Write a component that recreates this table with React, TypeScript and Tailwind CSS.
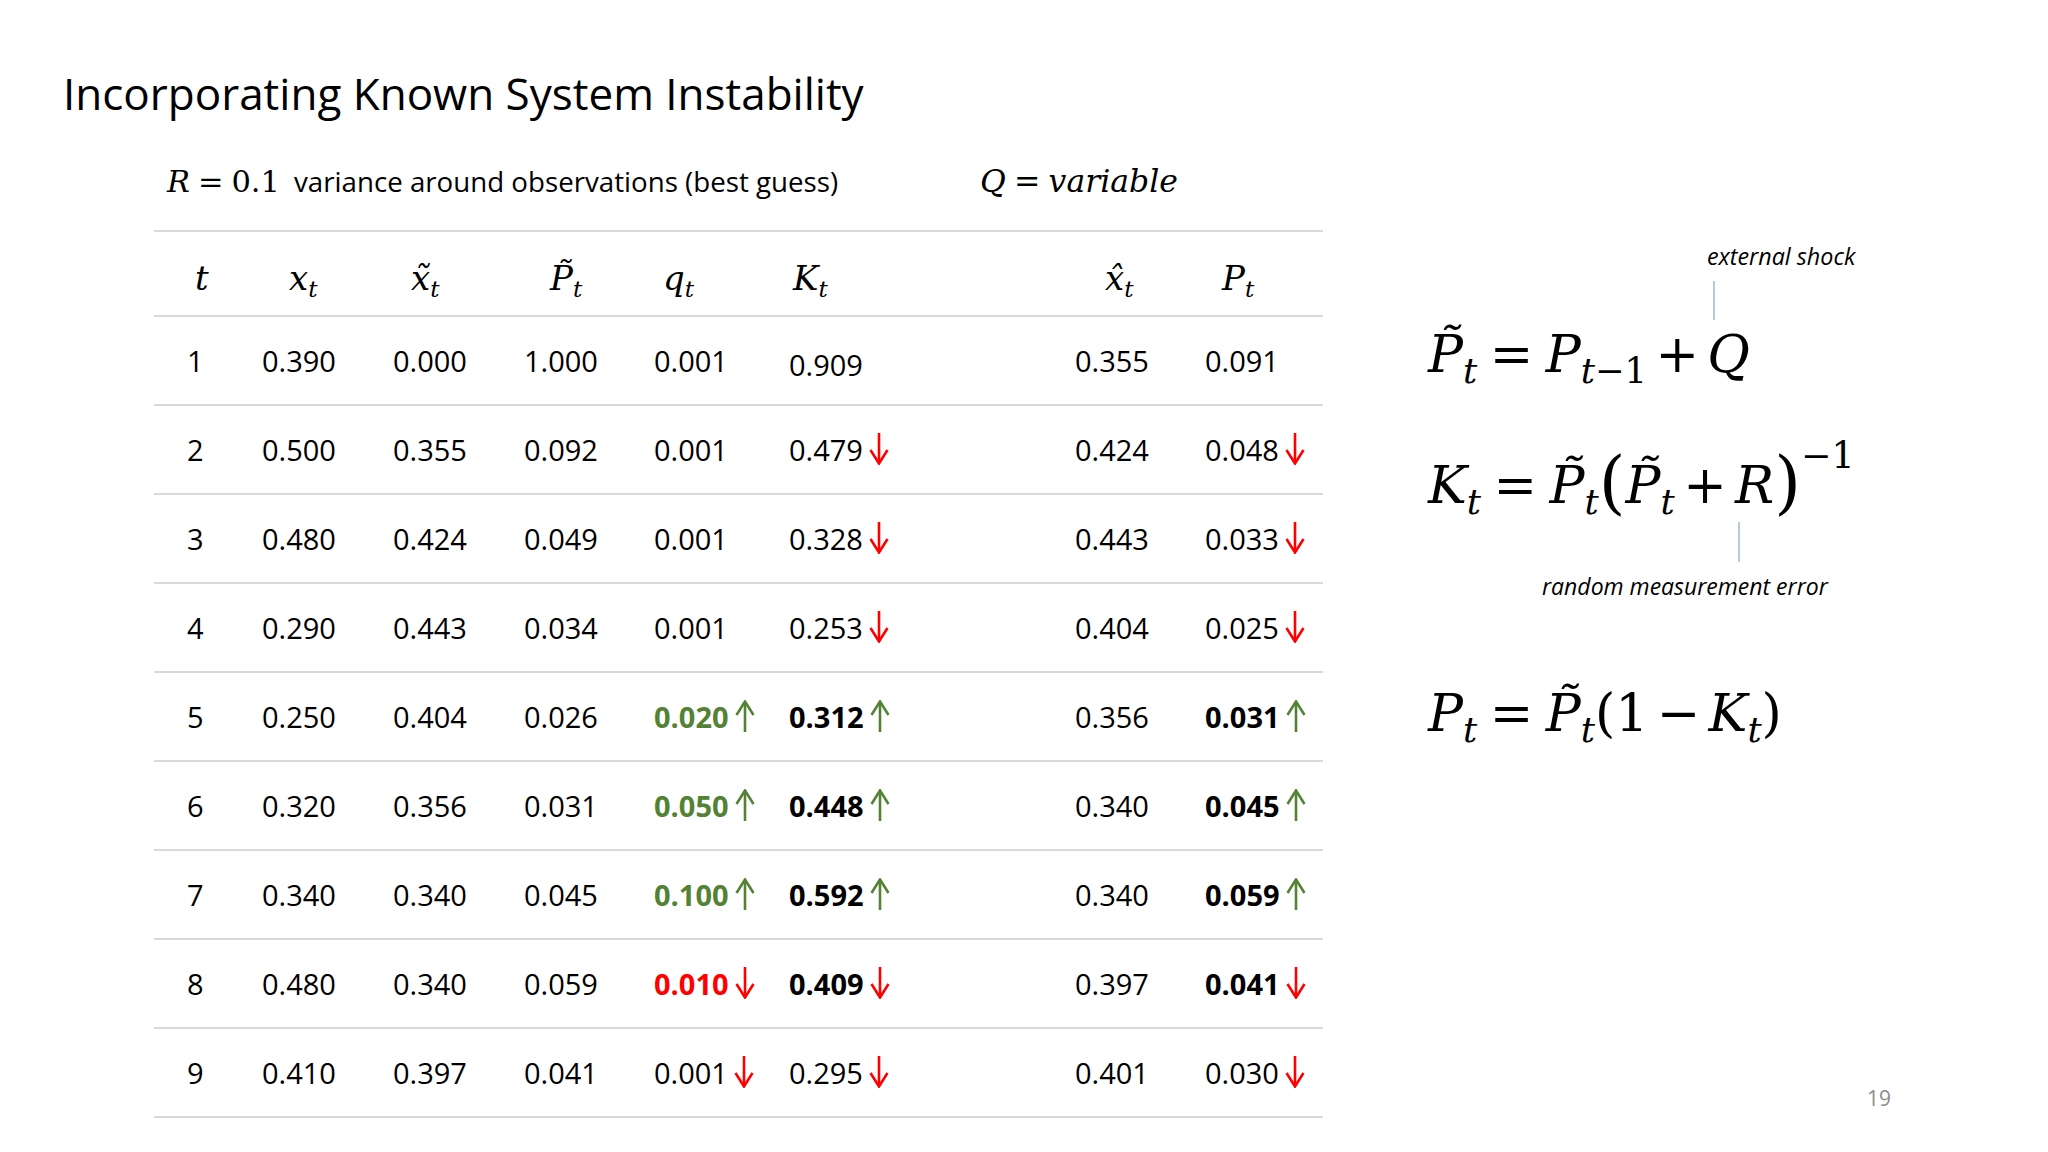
import React from "react";

type Cell = { v: string; bold?: boolean; color?: "green" | "red"; arrow?: "up" | "down" };

const rows: { t: string; cells: Cell[] }[] = [
  { t: "1", cells: [{ v: "0.390" }, { v: "0.000" }, { v: "1.000" }, { v: "0.001" }, { v: "0.909" }, { v: "0.355" }, { v: "0.091" }] },
  { t: "2", cells: [{ v: "0.500" }, { v: "0.355" }, { v: "0.092" }, { v: "0.001" }, { v: "0.479", arrow: "down" }, { v: "0.424" }, { v: "0.048", arrow: "down" }] },
  { t: "3", cells: [{ v: "0.480" }, { v: "0.424" }, { v: "0.049" }, { v: "0.001" }, { v: "0.328", arrow: "down" }, { v: "0.443" }, { v: "0.033", arrow: "down" }] },
  { t: "4", cells: [{ v: "0.290" }, { v: "0.443" }, { v: "0.034" }, { v: "0.001" }, { v: "0.253", arrow: "down" }, { v: "0.404" }, { v: "0.025", arrow: "down" }] },
  { t: "5", cells: [{ v: "0.250" }, { v: "0.404" }, { v: "0.026" }, { v: "0.020", bold: true, color: "green", arrow: "up" }, { v: "0.312", bold: true, arrow: "up" }, { v: "0.356" }, { v: "0.031", bold: true, arrow: "up" }] },
  { t: "6", cells: [{ v: "0.320" }, { v: "0.356" }, { v: "0.031" }, { v: "0.050", bold: true, color: "green", arrow: "up" }, { v: "0.448", bold: true, arrow: "up" }, { v: "0.340" }, { v: "0.045", bold: true, arrow: "up" }] },
  { t: "7", cells: [{ v: "0.340" }, { v: "0.340" }, { v: "0.045" }, { v: "0.100", bold: true, color: "green", arrow: "up" }, { v: "0.592", bold: true, arrow: "up" }, { v: "0.340" }, { v: "0.059", bold: true, arrow: "up" }] },
  { t: "8", cells: [{ v: "0.480" }, { v: "0.340" }, { v: "0.059" }, { v: "0.010", bold: true, color: "red", arrow: "down" }, { v: "0.409", bold: true, arrow: "down" }, { v: "0.397" }, { v: "0.041", bold: true, arrow: "down" }] },
  { t: "9", cells: [{ v: "0.410" }, { v: "0.397" }, { v: "0.041" }, { v: "0.001", arrow: "down" }, { v: "0.295", arrow: "down" }, { v: "0.401" }, { v: "0.030", arrow: "down" }] },
];

const Arrow = ({ dir }: { dir: "up" | "down" }) => {
  const c = dir === "up" ? "#548235" : "#ff0000";
  return (
    <svg width="20" height="32" viewBox="0 0 20 32" className="ml-[6px] -translate-y-[1px] shrink-0">
      {dir === "down" ? (
        <>
          <line x1="10" y1="0" x2="10" y2="30" stroke={c} strokeWidth="2.6" />
          <polyline points="1.5,17 10,30.5 18.5,17" fill="none" stroke={c} strokeWidth="2.6" />
        </>
      ) : (
        <>
          <line x1="10" y1="2" x2="10" y2="32" stroke={c} strokeWidth="2.6" />
          <polyline points="1.5,15 10,1.5 18.5,15" fill="none" stroke={c} strokeWidth="2.6" />
        </>
      )}
    </svg>
  );
};

const Sub = ({ children }: { children: React.ReactNode }) => (
  <span className="text-[0.68em] align-[-0.32em] leading-[0]">{children}</span>
);

const Op = ({ children, wide }: { children: React.ReactNode; wide?: boolean }) => (
  <span className={`not-italic ${wide ? "mx-[0.24em]" : "mx-[0.16em]"}`}>{children}</span>
);

const headers: { node: React.ReactNode; pl: string }[] = [
  { node: <>x<Sub>t</Sub></>, pl: "pl-[39px]" },
  { node: <>x&#x0303;<Sub>t</Sub></>, pl: "pl-[30px]" },
  { node: <>P&#x0303;<Sub>t</Sub></>, pl: "pl-[38px]" },
  { node: <>q<Sub>t</Sub></>, pl: "pl-[21px]" },
  { node: <>K<Sub>t</Sub></>, pl: "pl-[16px]" },
  { node: <>x&#x0302;<Sub>t</Sub></>, pl: "pl-[42px]" },
  { node: <>P<Sub>t</Sub></>, pl: "pl-[29px]" },
];

const grid = "grid grid-cols-[96px_131px_131px_130px_135px_286px_130px_130px]";
const math = "font-['DejaVu_Serif',serif] italic";

export default function App() {
  return (
    <div className="w-[2048px] h-[1152px] bg-white text-black font-['Open_Sans',sans-serif] flex flex-col pt-[71px]">
      <h1 className="pl-[63px] text-[44px] leading-[44px] h-[44px]">Incorporating Known System Instability</h1>

      <div className="flex flex-1 pb-[35px]">
        {/* left: parameters + table */}
        <div className="ml-[154px] w-[1169px] flex flex-col">
          <div className="h-[115px] pt-[46px] pl-[13px] flex items-baseline leading-[40px]">
            <span className="w-[127px] font-['DejaVu_Serif',serif] text-[30.5px]">
              <i>R</i>
              <span className="mx-[0.26em]">=</span>0.1
            </span>
            <span className="w-[686px] text-[27.7px]">variance around observations (best guess)</span>
            <span className={`${math} text-[31.5px]`}>
              Q<span className="not-italic mx-[0.26em]">=</span>variable
            </span>
          </div>

          <div className="border-t-2 border-[#d9d9d9]">
            <div className={`${grid} h-[85px] items-center border-b-2 border-[#d9d9d9] ${math} text-[34px] pt-[10px]`}>
              <div className="pl-[41px]">t</div>
              {headers.map((h, i) => (
                <div key={i} className={h.pl}>
                  {h.node}
                </div>
              ))}
            </div>
            {rows.map((r) => (
              <div key={r.t} className={`${grid} h-[89px] items-center border-b-2 border-[#d9d9d9] text-[29px]`}>
                <div className="pl-[33px]">{r.t}</div>
                {r.cells.map((c, i) => (
                  <div
                    key={i}
                    className={`pl-[12px] flex items-center ${r.t === "1" && i === 4 ? "pt-[8px]" : ""}`}
                  >
                    <span
                      className={`${c.bold ? "font-bold" : ""} ${
                        c.color === "green" ? "text-[#548235]" : c.color === "red" ? "text-[#ff0000]" : ""
                      }`}
                    >
                      {c.v}
                    </span>
                    {c.arrow && <Arrow dir={c.arrow} />}
                  </div>
                ))}
              </div>
            ))}
          </div>
        </div>

        {/* right: update equations */}
        <div className="ml-[105px] flex-1 flex flex-col">
          <div className="mt-[126px] pl-[279px] italic text-[23.3px] leading-[30px]">external shock</div>
          <div className="mt-[10px] ml-[285px] w-[2px] h-[39px] bg-[#b9cadb]" />
          <div className={`mt-[2px] h-[64px] leading-[64px] ${math} text-[52px] whitespace-nowrap`}>
            P&#x0303;<Sub>t</Sub>
            <Op wide>=</Op>P
            <Sub>
              t<span className="not-italic">&#x2212;1</span>
            </Sub>
            <Op>+</Op>Q
          </div>
          <div className={`mt-[67px] h-[64px] leading-[64px] ${math} text-[52px] whitespace-nowrap`}>
            K<Sub>t</Sub>
            <Op wide>=</Op>P&#x0303;<Sub>t</Sub>
            <span className="not-italic text-[1.32em] leading-[0] align-[-0.04em]">(</span>P&#x0303;<Sub>t</Sub>
            <Op>+</Op>R<span className="not-italic text-[1.32em] leading-[0] align-[-0.04em]">)</span>
            <span className="not-italic text-[0.7em] align-[0.95em] leading-[0]">&#x2212;1</span>
          </div>
          <div className="mt-[5px] ml-[310px] w-[2px] h-[40px] bg-[#b9cadb]" />
          <div className="mt-[9px] pl-[114px] italic text-[23px] leading-[30px]">random measurement error</div>
          <div className={`mt-[80px] h-[64px] leading-[64px] ${math} text-[52px] whitespace-nowrap`}>
            P<Sub>t</Sub>
            <Op wide>=</Op>P&#x0303;<Sub>t</Sub>
            <span className="not-italic">(1</span>
            <Op>&#x2212;</Op>K<Sub>t</Sub>
            <span className="not-italic">)</span>
          </div>
          <div className="mt-auto mb-[5px] pl-[439px] text-[21px] leading-[30px] text-[#8c8c8c]">19</div>
        </div>
      </div>
    </div>
  );
}
